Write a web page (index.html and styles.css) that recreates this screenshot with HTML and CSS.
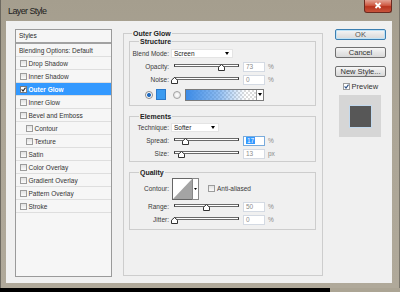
FILE: index.html
```html
<!DOCTYPE html>
<html lang="en">
<head>
  <meta charset="UTF-8">
  <title>Layer Style</title>
  <link rel="stylesheet" href="styles.css">
</head>
<body>

<div class="window">
  <div class="titlebar">
    <span class="title">Layer Style</span>
    <div class="close-btn">
      <svg viewBox="0 0 26 11" width="26" height="11"><path d="M10.5 3l5 5M15.5 3l-5 5" stroke="#fff" stroke-width="1.8"/></svg>
    </div>
  </div>

  <div class="client">

    <div class="styles-panel">
      <div class="styles-head">Styles</div>
      <div class="style-row plain">Blending Options: Default</div>
      <div class="style-row"><span class="check"></span>Drop Shadow</div>
      <div class="style-row"><span class="check"></span>Inner Shadow</div>
      <div class="style-row selected">
        <span class="check"><svg viewBox="0 0 5 5" width="5" height="5"><path d="M0.6 2.4L2 4L4.5 0.6" stroke="#222" stroke-width="1.1" fill="none"/></svg></span>Outer Glow
      </div>
      <div class="style-row"><span class="check"></span>Inner Glow</div>
      <div class="style-row"><span class="check"></span>Bevel and Emboss</div>
      <div class="style-row sub"><span class="check"></span>Contour</div>
      <div class="style-row sub"><span class="check"></span>Texture</div>
      <div class="style-row"><span class="check"></span>Satin</div>
      <div class="style-row"><span class="check"></span>Color Overlay</div>
      <div class="style-row"><span class="check"></span>Gradient Overlay</div>
      <div class="style-row"><span class="check"></span>Pattern Overlay</div>
      <div class="style-row"><span class="check"></span>Stroke</div>
    </div>

    <div class="main-box">
      <div class="group-title">Outer Glow</div>

      <div class="group">
        <div class="group-title">Structure</div>
        <div class="row first">
          <span class="lbl">Blend Mode:</span>
          <div class="dropdown screen">Screen<span class="arrow"></span></div>
        </div>
        <div class="row">
          <span class="lbl">Opacity:</span>
          <div class="slider"><span class="thumb" style="left: 43px"><svg viewBox="0 0 7 7" width="7" height="7"><path d="M3.5 0.5L6.5 3.2V6.5H0.5V3.2Z" fill="#fff" stroke="#333"/></svg></span></div>
          <span class="num">73</span><span class="unit">%</span>
        </div>
        <div class="row">
          <span class="lbl">Noise:</span>
          <div class="slider"><span class="thumb" style="left: -4px"><svg viewBox="0 0 7 7" width="7" height="7"><path d="M3.5 0.5L6.5 3.2V6.5H0.5V3.2Z" fill="#fff" stroke="#333"/></svg></span></div>
          <span class="num">0</span><span class="unit">%</span>
        </div>
        <div class="row color-row">
          <span class="radio on"></span>
          <span class="swatch"></span>
          <span class="radio"></span>
          <div class="gradient-box">
            <span class="grad"></span>
            <span class="grad-arrow"><span class="arrow"></span></span>
          </div>
        </div>
      </div>

      <div class="group spaced">
        <div class="group-title">Elements</div>
        <div class="row">
          <span class="lbl">Technique:</span>
          <div class="dropdown softer">Softer<span class="arrow"></span></div>
        </div>
        <div class="row">
          <span class="lbl">Spread:</span>
          <div class="slider"><span class="thumb" style="left: 7px"><svg viewBox="0 0 7 7" width="7" height="7"><path d="M3.5 0.5L6.5 3.2V6.5H0.5V3.2Z" fill="#fff" stroke="#333"/></svg></span></div>
          <span class="num focus"><span class="sel">17</span></span><span class="unit">%</span>
        </div>
        <div class="row">
          <span class="lbl">Size:</span>
          <div class="slider"><span class="thumb" style="left: 3px"><svg viewBox="0 0 7 7" width="7" height="7"><path d="M3.5 0.5L6.5 3.2V6.5H0.5V3.2Z" fill="#fff" stroke="#333"/></svg></span></div>
          <span class="num">13</span><span class="unit">px</span>
        </div>
      </div>

      <div class="group spaced quality">
        <div class="group-title">Quality</div>
        <div class="row contour-row">
          <span class="lbl">Contour:</span>
          <div class="contour">
            <svg viewBox="0 0 27 22" width="27" height="22">
              <rect x="0.5" y="0.5" width="20" height="21" fill="#fff" stroke="#666"/>
              <path d="M1 21L20 1V21Z" fill="#a4a4a4"/>
              <rect x="20.5" y="0.5" width="6" height="21" fill="#fff" stroke="#888"/>
              <path d="M22 10h3l-1.5 2z" fill="#000"/>
            </svg>
          </div>
          <span class="check aa"></span><span class="aa-label">Anti-aliased</span>
        </div>
        <div class="row">
          <span class="lbl">Range:</span>
          <div class="slider"><span class="thumb" style="left: 28px"><svg viewBox="0 0 7 7" width="7" height="7"><path d="M3.5 0.5L6.5 3.2V6.5H0.5V3.2Z" fill="#fff" stroke="#333"/></svg></span></div>
          <span class="num">50</span><span class="unit">%</span>
        </div>
        <div class="row">
          <span class="lbl">Jitter:</span>
          <div class="slider"><span class="thumb" style="left: -4px"><svg viewBox="0 0 7 7" width="7" height="7"><path d="M3.5 0.5L6.5 3.2V6.5H0.5V3.2Z" fill="#fff" stroke="#333"/></svg></span></div>
          <span class="num">0</span><span class="unit">%</span>
        </div>
      </div>
    </div>

    <div class="side">
      <div class="btn default">OK</div>
      <div class="btn cancel">Cancel</div>
      <div class="btn new-style">New Style...</div>
      <div class="preview-row">
        <span class="check"><svg viewBox="0 0 5 5" width="5" height="5"><path d="M0.6 2.4L2 4L4.5 0.6" stroke="#2a4f86" stroke-width="1.1" fill="none"/></svg></span>Preview
      </div>
      <div class="preview-box"><div class="preview-swatch"></div></div>
    </div>

  </div>
</div>
<div class="shadow-strip"></div>

</body>
</html>
```

FILE: styles.css
```css
* {
  box-sizing: border-box;
}

body {
  margin: 0;
  width: 400px;
  height: 292px;
  overflow: hidden;
  background: #000;
  font-family: "Liberation Sans", Arial, sans-serif;
  color: #2b2b2b;
}

.window {
  height: 288px;
  background: linear-gradient(#a59e8e, #aca596 40%, #b0a99a);
  border-left: 1px solid #6d6960;
  border-right: 1px solid #7a766c;
  display: flex;
  flex-direction: column;
}

.titlebar {
  height: 21px;
  flex: none;
  display: flex;
  align-items: flex-start;
  padding: 0 7px 0 7px;
}

.title {
  font-size: 9px;
  letter-spacing: -0.6px;
  color: #1d1d1d;
  margin-top: 6px;
}

.close-btn {
  margin-left: auto;
  width: 28px;
  height: 13px;
  border: 1px solid #6a2a20;
  border-top: none;
  border-radius: 0 0 3px 3px;
  background: linear-gradient(#e2a394, #cf5a44 45%, #b8351f 55%, #c9543c);
}

.close-btn svg {
  display: block;
}

.client {
  flex: 1;
  margin: 0 7px 5px 5px;
  background: #f0f0f0;
  display: flex;
  align-items: flex-start;
  padding: 8px 0 0 9px;
}

/* left list */
.styles-panel {
  width: 97px;
  height: 248px;
  flex: none;
  border: 1px solid #9a9a9a;
  background: #f6f6f6;
  font-size: 6.5px;
}

.styles-head {
  height: 14px;
  line-height: 12px;
  padding-left: 3px;
  border-bottom: 2px solid #a2a2a2;
}

.style-row {
  height: 13px;
  display: flex;
  align-items: center;
  border-bottom: 1px solid #dedede;
  color: #333;
}

.style-row.plain {
  padding-left: 3px;
}

.style-row.selected {
  background: #3399ff;
  color: #fff;
  font-weight: bold;
}

.check {
  width: 7px;
  height: 7px;
  flex: none;
  border: 1px solid #9c9c9c;
  background: linear-gradient(#e2e2e2, #fbfbfb);
  display: flex;
  align-items: center;
  justify-content: center;
}

.style-row .check {
  margin: 0 1.5px 0 4px;
}

.style-row.sub .check {
  margin-left: 10px;
}

.style-row.selected .check {
  background: #fff;
  border-color: #7a7a7a;
}

/* main area */
.main-box {
  width: 200px;
  height: 243px;
  flex: none;
  margin: 4px 0 0 11px;
  border: 1px solid #cdcdcd;
  padding: 0 6px 0 5px;
}

.group-title {
  width: fit-content;
  height: 9px;
  line-height: 9px;
  margin: -5px 0 0 3px;
  padding: 0 1px;
  background: #f0f0f0;
  font-size: 7px;
  font-weight: bold;
  color: #222;
}

.group {
  margin-top: 3px;
  border: 1px solid #cdcdcd;
  padding-bottom: 4px;
}

.group .group-title {
  margin-left: 9px;
}

.group.spaced {
  margin-top: 10px;
  padding-bottom: 1px;
}

.group.quality {
  padding-bottom: 3px;
}

.row {
  height: 13px;
  display: flex;
  align-items: center;
  font-size: 6.5px;
}

.row.first {
  margin-top: 1px;
}

.lbl {
  width: 39px;
  flex: none;
  text-align: right;
  color: #3a3a3a;
}

.dropdown {
  height: 9px;
  margin-left: 2px;
  background: #fff;
  border: 1px solid #e4e4e4;
  display: flex;
  align-items: center;
  justify-content: space-between;
  padding: 0 3px 0 2px;
  color: #222;
}

.dropdown.screen {
  width: 62px;
}

.dropdown.softer {
  width: 48px;
}

.arrow {
  width: 0;
  height: 0;
  border-top: 3px solid #000;
  border-left: 2.5px solid transparent;
  border-right: 2.5px solid transparent;
}

.slider {
  position: relative;
  width: 65px;
  height: 3px;
  margin: 0 0 2px 5px;
  border: 1px solid #6a6a6a;
  border-left: 1px solid #333;
  border-right: 1px solid #333;
  background: #fff;
}

.thumb {
  position: absolute;
  top: -1px;
  width: 7px;
  height: 7px;
}

.thumb svg {
  display: block;
}

.num {
  width: 22px;
  height: 10px;
  margin-left: 4px;
  border: 1px solid #d4dae3;
  background: #fff;
  color: #8c8c8c;
  padding-left: 2px;
  line-height: 8px;
}

.num.focus {
  border-color: #79abdc;
}

.sel {
  background: #3399ff;
  color: #fff;
  padding: 0 1px;
}

.unit {
  margin-left: 3px;
  color: #8a8a8a;
}

.color-row {
  margin-top: 2px;
}

.radio {
  width: 8px;
  height: 8px;
  flex: none;
  border: 1px solid #a2a2a2;
  border-radius: 50%;
  background: radial-gradient(circle, #ffffff, #dcdcdc);
  margin-left: 7px;
}

.radio.on {
  margin-left: 15px;
  background: radial-gradient(circle, #1d5fae 0, #2a74c6 1.6px, #ffffff 2.4px);
  border-color: #8b8b8b;
}

.swatch {
  width: 10px;
  height: 11px;
  margin-left: 3px;
  background: #3b9bf0;
  border: 1px solid #2b79c9;
}

.gradient-box {
  width: 79px;
  height: 12px;
  margin-left: 4px;
  border: 1px solid #7a7a7a;
  display: flex;
}

.grad {
  flex: 1;
  background:
    linear-gradient(to right, #3c8be6 0%, rgba(60, 139, 230, 0.6) 45%, rgba(60, 139, 230, 0) 85%),
    repeating-conic-gradient(#dcdcdc 0 25%, #ffffff 0 50%) 0 0 / 4px 4px;
}

.grad-arrow {
  width: 7px;
  border-left: 1px solid #9a9a9a;
  background: #fff;
  display: flex;
  align-items: center;
  justify-content: center;
}

.contour-row {
  height: 23px;
}

.contour {
  margin-left: 3px;
  width: 27px;
  height: 22px;
}

.contour svg {
  display: block;
}

.check.aa {
  margin-left: 9px;
}

.aa-label {
  margin-left: 2px;
  color: #3a3a3a;
}

/* right column */
.side {
  width: 51px;
  flex: none;
  margin-left: 12px;
  display: flex;
  flex-direction: column;
}

.btn {
  height: 11px;
  border: 1px solid #707070;
  border-radius: 2px;
  background: linear-gradient(#f7f7f7, #e6e6e6 50%, #d9d9d9);
  font-size: 7.5px;
  line-height: 9px;
  text-align: center;
  color: #333;
}

.btn.default {
  border-color: #3c7fb1;
  box-shadow: inset 0 0 0 1px #bfe3f7;
  color: #555;
}

.btn.cancel {
  margin-top: 7px;
}

.btn.new-style {
  margin-top: 8px;
}

.preview-row {
  margin-top: 5px;
  height: 9px;
  padding-left: 8px;
  display: flex;
  align-items: center;
  font-size: 7.5px;
  color: #333;
}

.preview-row .check {
  margin-right: 1.5px;
  background: #fff;
}

.preview-box {
  width: 42px;
  height: 42px;
  margin: 4px 0 0 4px;
  background: #d6d6d6;
  display: flex;
  align-items: center;
  justify-content: center;
}

.preview-swatch {
  width: 21px;
  height: 21px;
  background: #575757;
  box-shadow: 0 0 0 1px #c2d9ee;
}

.shadow-strip {
  height: 4px;
  margin-left: 330px;
  background: #aba494;
}
```
